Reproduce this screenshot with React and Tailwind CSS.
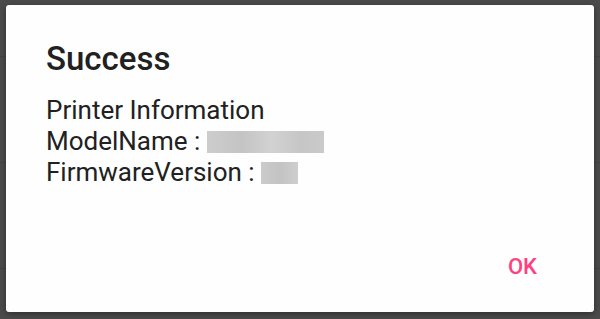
export default function App() {
  return (
    <div className="relative w-[600px] h-[319px] overflow-hidden bg-[#4b4b4b]" style={{ fontFamily: "Roboto, 'Noto Sans', sans-serif" }}>
      <div className="flex flex-col">
        <div className="h-[57px] border-b border-[#444444]"></div>
        <div className="h-[106px] border-b border-[#444444]"></div>
        <div className="h-[106px] border-b border-[#444444]"></div>
      </div>
      <div className="absolute left-[6px] top-[5px] w-[588px] h-[307px] rounded-[3px] bg-[#fefefe] shadow-[0_2px_6px_rgba(0,0,0,0.4)] flex flex-col">
        <div className="pl-[40px] pt-[35px] text-[33px] leading-[38px] font-medium text-[#212121]">Success</div>
        <div className="pl-[40px] mt-[17px] text-[26px] leading-[31px] text-[#212121]">
          <div>Printer Information</div>
          <div className="flex items-center">
            <span>ModelName :&nbsp;</span>
            <span className="inline-block w-[117px] h-[22px] bg-[linear-gradient(90deg,#cdcdcd,#c4c4c4_30%,#d2d2d2_55%,#c6c6c6_80%,#cacaca)] blur-[0.6px]"></span>
          </div>
          <div className="flex items-center">
            <span>FirmwareVersion :&nbsp;</span>
            <span className="inline-block w-[37px] h-[22px] bg-[linear-gradient(90deg,#cbcbcb,#c3c3c3_50%,#cecece)] blur-[0.6px]"></span>
          </div>
        </div>
        <div className="flex-1"></div>
        <div className="flex justify-end pr-[57px] pb-[32px]">
          <span className="text-[22px] leading-[26px] font-medium text-[#ff4081]">OK</span>
        </div>
      </div>
    </div>
  );
}
